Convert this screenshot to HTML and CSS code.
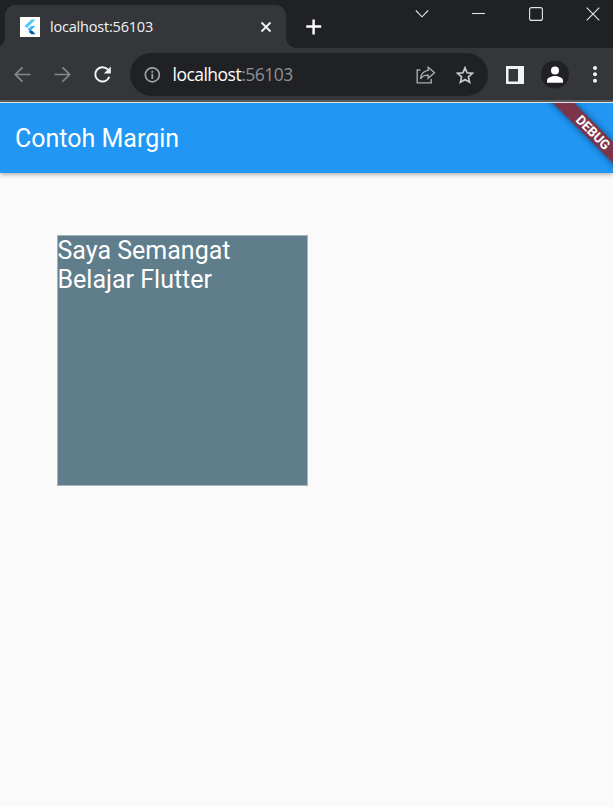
FILE: index.html
```html
<!DOCTYPE html>
<html lang="id">
<head>
<meta charset="utf-8">
<title>Contoh Margin</title>
<link rel="stylesheet" href="styles.css">
</head>
<body>
<div class="window">
  <header class="tabstrip">
    <div class="tab">
      <svg class="favicon" width="20" height="20" viewBox="0 0 20 20"><path fill="#fff" d="M0 0h20v20H0z"/><path fill="#54c5f8" d="M11.5 2.5h4L7 11 4.5 9z"/><path fill="#42b8f5" d="M11.5 9h4L10 14.5 7.5 12z"/><path fill="#01579b" d="M10 13.5l2 0 3.5 3.7h-4L8.8 15z"/></svg>
      <span class="tab-title">localhost:56103</span>
      <svg class="tab-close" width="12" height="12" viewBox="0 0 12 12"><path d="M1.5 1.5l9 9m0-9l-9 9" fill="none" stroke="#f1f3f4" stroke-width="1.9"/></svg>
    </div>
    <svg class="new-tab" width="16" height="16" viewBox="0 0 16 16"><path d="M7.6 .5v15M.2 7.5h15" fill="none" stroke="#fff" stroke-width="2.4"/></svg>
    <div class="controls">
      <svg width="14" height="14" viewBox="0 0 14 14"><path d="M.8 3.5L7 9.8l6.2-6.3"/></svg>
      <svg width="14" height="14" viewBox="0 0 14 14"><path d="M0 6.5h13"/></svg>
      <svg width="14" height="14" viewBox="0 0 14 14"><rect x=".6" y=".6" width="12.8" height="12.8" rx="2"/></svg>
      <svg width="14" height="14" viewBox="0 0 14 14"><path d="M.7.7l12.6 12.6M13.3.7L.7 13.3"/></svg>
    </div>
  </header>
  <nav class="toolbar">
    <svg class="nav-icon" width="18" height="18" viewBox="0 0 18 18"><path d="M17.5 8.5h-15M9.5 1.3L2.3 8.5l7.2 7.2" fill="none" stroke="#85878a" stroke-width="1.7"/></svg>
    <svg class="nav-icon" width="18" height="18" viewBox="0 0 18 18"><path d="M1.5 8.5h15M9.5 1.3l7.2 7.2-7.2 7.2" fill="none" stroke="#85878a" stroke-width="1.7"/></svg>
    <svg class="nav-icon" width="18" height="18" viewBox="0 0 18 18"><path d="M14.8 3.5A7.2 7.2 0 1 0 16.3 10.7" fill="none" stroke="#f1f3f4" stroke-width="2"/><path d="M17.8 .5v6.9h-6.9z" fill="#f1f3f4"/></svg>
    <div class="omnibox">
      <svg width="16" height="16" viewBox="0 0 16 16"><circle cx="8.3" cy="7.8" r="7" fill="none" stroke="#9aa0a6" stroke-width="1.7"/><path d="M8.3 3.7v2M8.3 6.8v5.2" stroke="#9aa0a6" stroke-width="1.8"/></svg>
      <span class="url">localhost<span class="port">:56103</span></span>
      <svg class="share" width="20" height="18" viewBox="0 0 20 18"><path d="M4.3 4H1.2v12.9h14V13" fill="none" stroke="#a9acb0" stroke-width="1.4"/><path d="M12.2 1.2L18.5 6.7l-6.3 5.5V9.1C8.5 9 6.2 10 4.5 12.8 5 8 7.5 5 12.2 4.4z" fill="none" stroke="#a9acb0" stroke-width="1.4"/></svg>
      <svg width="18" height="18" viewBox="0 0 18 18"><path d="M9 1.8l2.1 5 5.4.5-4.1 3.6 1.2 5.3L9 13.4l-4.6 2.8 1.2-5.3-4.1-3.6 5.4-.5z" fill="none" stroke="#c4c6c8" stroke-width="1.7"/></svg>
    </div>
    <svg class="panel" width="18" height="18" viewBox="0 0 18 18"><path fill="#f1f3f4" fill-rule="evenodd" d="M0 0h18v18H0zM2.5 3v12.5H12V3z"/></svg>
    <svg class="avatar" width="28" height="28" viewBox="0 0 28 28"><circle cx="14" cy="13.5" r="14" fill="#202124"/><circle cx="14" cy="9.6" r="4" fill="#fff"/><path fill="#fff" d="M6 21.7v-2c0-3 5-4.6 8-4.6s8 1.6 8 4.6v2z"/></svg>
    <svg class="more" width="4" height="18" viewBox="0 0 4 18"><g fill="#f1f3f4"><circle cx="2" cy="2" r="2"/><circle cx="2" cy="8.3" r="2"/><circle cx="2" cy="14.7" r="2"/></g></svg>
  </nav>
  <main class="page">
    <div class="appbar">
      <h1>Contoh Margin</h1>
    </div>
    <div class="card"><p>Saya Semangat Belajar Flutter</p></div>
    <div class="banner-clip"><div class="banner"><span>DEBUG</span></div></div>
  </main>
</div>
</body>
</html>
```
FILE: styles.css
```css
* { box-sizing: border-box; }
body { margin: 0; overflow: hidden; background: #fafafa; }
svg { display: block; flex: none; }
.window { width: 613px; height: 807px; display: flex; flex-direction: column; }
.tabstrip {
  height: 48px; flex: none; background: #202124;
  display: flex; padding-left: 5px;
}
.tab {
  position: relative; width: 281px; height: 43px; margin-top: 5px; padding: 0 15px;
  display: flex; align-items: center;
  background: #35363a; border-radius: 10px 10px 0 0;
}
.tab::before, .tab::after {
  content: ""; position: absolute; bottom: 0; width: 10px; height: 10px;
}
.tab::before { left: -10px; background: radial-gradient(circle at 0 0, transparent 9.5px, #35363a 10px); }
.tab::after { right: -10px; background: radial-gradient(circle at 100% 0, transparent 9.5px, #35363a 10px); }
.tab-title {
  margin-left: 10px; font: 14.5px/20px "Open Sans", sans-serif; letter-spacing: -0.2px; color: #f1f3f4;
}
.tab-close { margin-left: auto; margin-right: -1px; }
.new-tab { margin: 19px 0 0 20px; }
.controls { display: flex; gap: 43px; margin: 7px 0 0 93px; }
.controls svg { fill: none; stroke: #e4e5e7; stroke-width: 1.1; }
.toolbar {
  height: 54px; flex: none; padding: 5px 0 4px 13px;
  display: flex; align-items: center;
  background: #35363a; border-bottom: 2px solid #5d5e62;
}
.nav-icon { margin-right: 22px; }
.omnibox {
  width: 358px; height: 43px; margin-left: -3px; padding: 0 14px;
  display: flex; align-items: center;
  background: #202124; border-radius: 22px;
}
.url { margin-left: 12.5px; padding-bottom: 1px; font: 17.5px/24px "Open Sans", sans-serif; letter-spacing: -0.52px; color: #fff; }
.port { color: #8f9194; }
.share { margin-left: auto; margin-right: 20px; }
.panel { margin-left: 18px; }
.avatar { margin-left: 17px; }
.more { margin-left: 24px; }
.page {
  position: relative; flex: 1; border-top: 1px solid #fff; background: #fafafa;
  font-family: Roboto, sans-serif; color: #fff;
}
.appbar {
  height: 70px; padding: 2px 0 0 15px; display: flex; align-items: center;
  background: #2196f3; box-shadow: 0 1px 5px rgba(0, 0, 0, .38);
}
.appbar h1 { margin: 0; font-size: 25px; font-weight: 400; line-height: 30px; }
.card {
  width: 251px; height: 251px; margin: 62px 0 0 57px;
  background: #607d8b; border: 1px solid #a5b5bd;
}
.card p { margin: 0 20px 0 -0.5px; font-size: 25px; line-height: 29px; }
.banner-clip { position: absolute; top: 0; right: 0; width: 80px; height: 80px; overflow: hidden; }
.banner {
  position: absolute; left: 0; top: 22px; width: 120px; height: 15px;
  display: flex; align-items: center; justify-content: center;
  transform: rotate(45deg);
  background: #7c3449; box-shadow: 0 0 7px rgba(0, 0, 0, .5);
  font-size: 13.2px; font-weight: 700; line-height: 15px;
}
```
